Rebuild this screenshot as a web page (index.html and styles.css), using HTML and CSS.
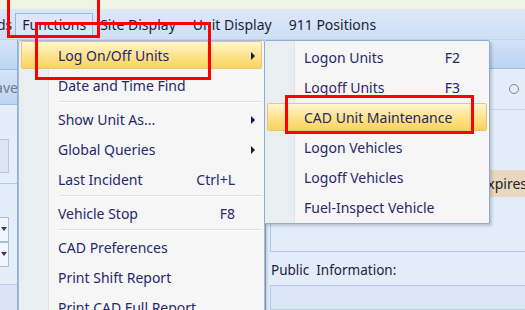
FILE: index.html
```html
<!DOCTYPE html>
<html lang="en">
<head>
    <meta charset="UTF-8">
    <meta name="viewport" content="width=device-width, initial-scale=1.0">
    <title>CAD - Functions Menu</title>
    <link rel="stylesheet" href="styles.css">
</head>
<body>

<div class="app">
    <div class="title-strip"></div>

    <!-- Menu bar -->
    <div class="menubar">
        <span class="bar-item bar-cut">ds</span>
        <span class="bar-item bar-open">Functions</span>
        <span class="bar-item">Site Display</span>
        <span class="bar-item">Unit Display</span>
        <span class="bar-item">911 Positions</span>
    </div>

    <!-- Workspace behind the menus -->
    <div class="workspace">
        <div class="sidebar">
            <div class="side-btn"></div>
            <div class="side-btn side-save"><span>Save</span></div>
            <div class="side-box"></div>
            <div class="side-line"></div>
            <div class="side-combo"></div>
            <div class="side-combo"></div>
            <div class="side-foot"></div>
        </div>
        <div class="middle"></div>
        <div class="panel">
            <div class="panel-head"></div>
            <div class="panel-row"><span class="radio"></span></div>
            <div class="panel-info">
                <span class="expires">Expires</span>
            </div>
            <div class="panel-box"></div>
            <div class="panel-label">Public&nbsp; Information:</div>
            <div class="panel-input"></div>
        </div>
    </div>

    <!-- Functions menu -->
    <div class="menu main-menu">
        <div class="menu-item active"><span class="label">Log On/Off Units</span><span class="arrow"></span></div>
        <div class="menu-item"><span class="label">Date and Time Find</span></div>
        <div class="sep"></div>
        <div class="menu-item"><span class="label">Show Unit As...</span><span class="arrow"></span></div>
        <div class="menu-item"><span class="label">Global Queries</span><span class="arrow"></span></div>
        <div class="menu-item"><span class="label">Last Incident</span><span class="key">Ctrl+L</span></div>
        <div class="sep"></div>
        <div class="menu-item"><span class="label">Vehicle Stop</span><span class="key">F8</span></div>
        <div class="sep"></div>
        <div class="menu-item"><span class="label">CAD Preferences</span></div>
        <div class="menu-item"><span class="label">Print Shift Report</span></div>
        <div class="menu-item"><span class="label">Print CAD Full Report</span></div>
    </div>

    <!-- Log On/Off Units submenu -->
    <div class="menu sub-menu">
        <div class="menu-item"><span class="label">Logon Units</span><span class="key">F2</span></div>
        <div class="menu-item"><span class="label">Logoff Units</span><span class="key">F3</span></div>
        <div class="menu-item active"><span class="label">CAD Unit Maintenance</span></div>
        <div class="menu-item"><span class="label">Logon Vehicles</span></div>
        <div class="menu-item"><span class="label">Logoff Vehicles</span></div>
        <div class="menu-item"><span class="label">Fuel-Inspect Vehicle</span></div>
    </div>

    <!-- Annotation boxes -->
    <div class="mark mark-functions"></div>
    <div class="mark mark-logon"></div>
    <div class="mark mark-cad"></div>
</div>

</body>
</html>
```

FILE: styles.css
```css
body {
    margin: 0;
    font-family: "Noto Sans", "Open Sans", sans-serif;
    font-size: 14px;
}
.app {
    position: relative;
    width: 525px;
    height: 310px;
    overflow: hidden;
    background-color: #e3edfa;
}
.title-strip {
    height: 9px;
    background-color: #eff4e2;
}

/* menu bar */
.menubar {
    height: 31px;
    display: flex;
    align-items: center;
    background: linear-gradient(#dbe8f9, #cfdff5);
    color: #1e1e3c;
    border-bottom: 1px solid #c2d4ec;
    box-sizing: border-box;
}
.bar-item {
    padding: 1px 6px;
    margin-right: 3px;
    border: 1px solid transparent;
}
.bar-cut {
    margin-left: -10px;
    margin-right: -1px;
    padding-right: 3px;
}
.bar-open {
    background-color: #dce8f8;
    border-color: #9db7da;
    margin-right: 0;
}

/* workspace */
.workspace {
    display: flex;
    height: 270px;
}
.sidebar {
    width: 17px;
    border-right: 1px solid #8fb0da;
    display: flex;
    flex-direction: column;
    background-color: #e4eefb;
}
.side-btn {
    height: 29px;
    background: linear-gradient(#d5e5f9, #bed4f1);
    border-bottom: 1px solid #9fbbe0;
}
.side-save {
    height: 34px;
    display: flex;
    align-items: center;
    justify-content: flex-end;
    color: #6d7a8c;
    overflow: hidden;
}
.side-save span {
    margin-right: -1px;
}
.side-box {
    height: 32px;
    width: 8px;
    margin-top: 34px;
    border: 1px solid #b9c9dd;
    border-left: none;
    background-color: #dde7f3;
}
.side-line {
    margin-top: 10px;
    border-top: 1px solid #b5c9e4;
}
.side-combo {
    height: 23px;
    width: 8px;
    margin-top: 33px;
    border: 1px solid #a9bedb;
    border-left: none;
    background-color: #f2f6fc;
    position: relative;
}
.side-combo + .side-combo {
    margin-top: 0;
}
.side-combo::after {
    content: "";
    position: absolute;
    left: 1px;
    top: 9px;
    border-left: 3px solid transparent;
    border-right: 3px solid transparent;
    border-top: 4px solid #2b3b5a;
}
.side-foot {
    margin-top: 17px;
    flex: 1;
    border-top: 1px solid #b5c9e4;
    background-color: #d9e5f5;
}
.middle {
    width: 247px;
}
.panel {
    flex: 1;
    border-left: 1px solid #8fb0da;
    display: flex;
    flex-direction: column;
}
.panel-head {
    height: 28px;
    background: linear-gradient(#d3e3f8, #bcd3f1);
    border-bottom: 1px solid #9fbbe0;
}
.panel-row {
    height: 40px;
    display: flex;
    align-items: center;
    justify-content: flex-end;
    padding-right: 6px;
    border-bottom: 1px solid #c6d7ee;
}
.radio {
    width: 8px;
    height: 8px;
    border: 1.5px solid #6e86a8;
    border-radius: 50%;
}
.panel-info {
    height: 72px;
    display: flex;
    align-items: flex-start;
    justify-content: flex-end;
}
.expires {
    margin-top: 60px;
    padding: 4px 6px;
    background-color: #ead7c0;
    color: #232323;
    margin-right: -8px;
}
.panel-box {
    height: 69px;
    margin-left: 4px;
    border: 1px solid #b4c8e2;
    border-right: none;
    border-top: none;
}
.panel-label {
    padding: 9px 0 0 5px;
    height: 24px;
    box-sizing: border-box;
    color: #1e1e3c;
    font-size: 13.5px;
}
.panel-input {
    margin: 9px 0 0 4px;
    flex: 1;
    border: 1px solid #b4c8e2;
    border-right: none;
    background-color: #dde6f4;
}

/* drop-down menus */
.menu {
    position: absolute;
    background-color: #f6f6f6;
    border: 1px solid #a8b9d0;
    border-radius: 2px;
    box-shadow: 2px 2px 3px rgba(0, 0, 0, 0.18);
    color: #26286a;
    box-sizing: border-box;
}
.menu::before {
    content: "";
    position: absolute;
    left: 0;
    top: 0;
    bottom: 0;
    width: 29px;
    background-color: #e9eef0;
    border-right: 1px solid #dfe3e6;
}
.main-menu {
    left: 18px;
    top: 40px;
    width: 247px;
    height: 290px;
}
.sub-menu {
    left: 264px;
    top: 40px;
    width: 226px;
    height: 184px;
    padding-top: 2px;
    border-color: #8eabd3;
}
.menu-item {
    position: relative;
    display: flex;
    align-items: center;
    height: 28px;
    margin: 0 2px 2px;
    padding-left: 36px;
    padding-right: 26px;
    border: 1px solid transparent;
    border-radius: 2px;
    box-sizing: border-box;
}
.menu-item .label {
    flex: 1;
}
.menu-item .key {
    color: #26286a;
}
.menu-item.active {
    background: linear-gradient(#fff6d4, #fde595 45%, #fbd35f);
    border-color: #e6c87a;
}
.arrow {
    position: absolute;
    right: 6px;
    top: 10px;
    border-top: 4px solid transparent;
    border-bottom: 4px solid transparent;
    border-left: 4px solid #101a3a;
}
.sep {
    height: 1px;
    margin: 0 2px 2px 40px;
    background-color: #dfe0e1;
    border-bottom: 1px solid #ffffff;
}

/* red annotation boxes */
.mark {
    position: absolute;
    border: 3px solid #ff0000;
    box-sizing: border-box;
}
.mark-functions {
    left: 7px;
    top: -4px;
    width: 93px;
    height: 42px;
}
.mark-logon {
    left: 35px;
    top: 22px;
    width: 176px;
    height: 58px;
}
.mark-cad {
    left: 285px;
    top: 95px;
    width: 189px;
    height: 39px;
}
```
